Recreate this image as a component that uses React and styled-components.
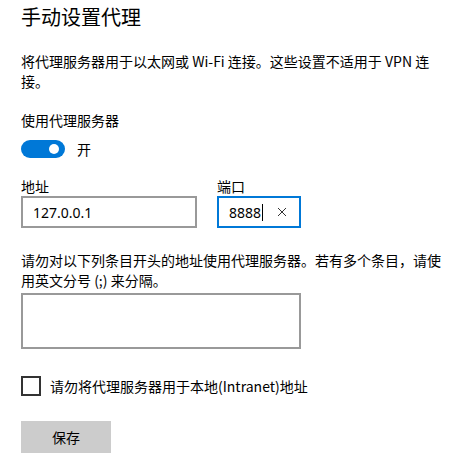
import React from "react";
import styled, { createGlobalStyle } from "styled-components";

const GlobalStyle = createGlobalStyle`
  html, body {
    margin: 0;
    padding: 0;
    background: #fff;
  }
  body {
    font-family: "Noto Sans CJK SC", "Noto Sans", sans-serif;
    color: #000;
  }
`;

const Page = styled.div`
  width: 453px;
  height: 472px;
  box-sizing: border-box;
  padding: 3px 0 0 21px;
  overflow: hidden;
`;

const Title = styled.h1`
  margin: 0;
  font-size: 20px;
  line-height: 28px;
  font-weight: 400;
`;

const Text = styled.p`
  margin: ${(props) => props.margin || "0"};
  width: 422px;
  font-size: 14px;
  line-height: 20px;
`;

const ToggleRow = styled.div`
  display: flex;
  align-items: center;
  gap: 12px;
  margin-top: 9px;
  font-size: 14px;
  line-height: 20px;
`;

const Track = styled.div`
  width: 44px;
  height: 18px;
  border-radius: 9px;
  background: #0078d7;
  display: flex;
  align-items: center;
  justify-content: flex-end;
  padding-right: 6px;
  box-sizing: border-box;
`;

const Knob = styled.div`
  width: 10px;
  height: 10px;
  border-radius: 50%;
  background: #fff;
`;

const FieldRow = styled.div`
  display: flex;
  gap: 20px;
  margin-top: 17px;
`;

const Field = styled.div`
  display: flex;
  flex-direction: column;
`;

const Label = styled.label`
  font-size: 14px;
  line-height: 20px;
`;

const InputBox = styled.div`
  width: ${(props) => props.width}px;
  height: 32px;
  box-sizing: border-box;
  border: 2px solid ${(props) => (props.focused ? "#0078d7" : "#999")};
  display: flex;
  align-items: center;
  padding: 0 10px;
  font-size: 14px;
  font-family: "Noto Sans", "Noto Sans CJK SC", sans-serif;
`;

const Caret = styled.span`
  display: inline-block;
  width: 1px;
  height: 17px;
  background: #000;
  margin-left: 1px;
`;

const Clear = styled.span`
  margin-left: auto;
  margin-right: 2px;
  display: flex;
  align-items: center;
`;

const Area = styled.div`
  width: 280px;
  height: 56px;
  box-sizing: border-box;
  border: 2px solid #999;
  margin-top: 3px;
`;

const CheckRow = styled.div`
  display: flex;
  align-items: center;
  gap: 9px;
  margin-top: 27px;
  font-size: 14px;
  line-height: 20px;
`;

const Box = styled.div`
  width: 20px;
  height: 20px;
  box-sizing: border-box;
  border: 2px solid #333;
`;

const SaveButton = styled.button`
  margin-top: 25px;
  width: 90px;
  height: 32px;
  border: none;
  background: #ccc;
  font-family: inherit;
  font-size: 14px;
  color: #000;
  padding: 0;
`;

const App = () => {
  return (
    <Page>
      <GlobalStyle />
      <Title>手动设置代理</Title>
      <Text margin="20px 0 0">
        将代理服务器用于以太网或 Wi-Fi 连接。这些设置不适用于 VPN 连接。
      </Text>
      <Text margin="19px 0 0">使用代理服务器</Text>
      <ToggleRow>
        <Track>
          <Knob />
        </Track>
        <span>开</span>
      </ToggleRow>
      <FieldRow>
        <Field>
          <Label>地址</Label>
          <InputBox width={176}>127.0.0.1</InputBox>
        </Field>
        <Field>
          <Label>端口</Label>
          <InputBox width={84} focused>
            8888
            <Caret />
            <Clear>
              <svg width="10" height="10" viewBox="0 0 10 10">
                <path d="M1 1L9 9M9 1L1 9" stroke="#333" strokeWidth="1" />
              </svg>
            </Clear>
          </InputBox>
        </Field>
      </FieldRow>
      <Text margin="22px 0 0">
        请勿对以下列条目开头的地址使用代理服务器。若有多个条目，请使用英文分号 (;) 来分隔。
      </Text>
      <Area />
      <CheckRow>
        <Box />
        <span>请勿将代理服务器用于本地(Intranet)地址</span>
      </CheckRow>
      <SaveButton>保存</SaveButton>
    </Page>
  );
};

export default App;
